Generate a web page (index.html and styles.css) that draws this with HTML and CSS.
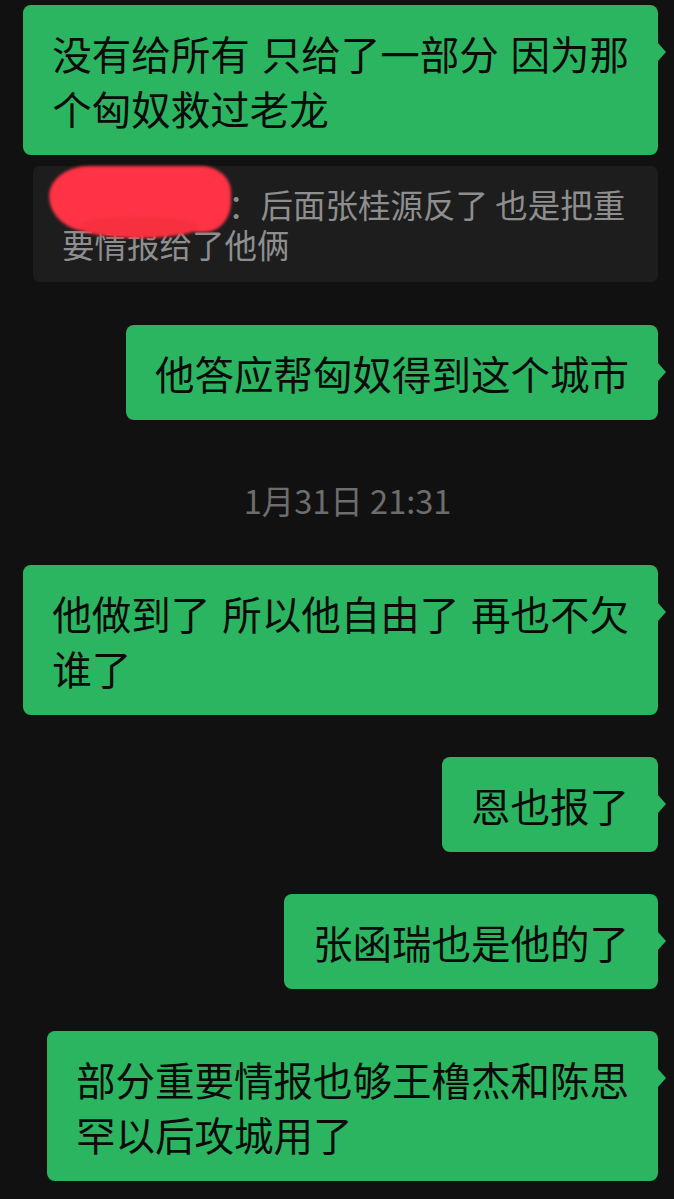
FILE: index.html
```html
<!DOCTYPE html>
<html lang="zh-CN">
<head>
    <meta charset="utf-8">
    <title>聊天记录</title>
    <link rel="stylesheet" href="styles.css">
</head>
<body>
<div class="chat">
    <div class="row first">
        <div class="bubble">没有给所有 只给了一部分 因为那<br>个匈奴救过老龙</div>
    </div>
    <div class="row quote-row">
        <div class="quote">
            <span class="name"></span>：后面张桂源反了 也是把重要情报给了他俩
            <div class="redact"></div>
        </div>
    </div>
    <div class="row after-quote">
        <div class="bubble">他答应帮匈奴得到这个城市</div>
    </div>

    <div class="time">1月31日 21:31</div>

    <div class="row after-time">
        <div class="bubble">他做到了 所以他自由了 再也不欠<br>谁了</div>
    </div>
    <div class="row">
        <div class="bubble">恩也报了</div>
    </div>
    <div class="row">
        <div class="bubble">张函瑞也是他的了</div>
    </div>
    <div class="row">
        <div class="bubble">部分重要情报也够王橹杰和陈思<br>罕以后攻城用了</div>
    </div>
</div>
</body>
</html>
```

FILE: styles.css
```css
body {
    margin: 0;
    background-color: #111111;
    font-family: "Noto Sans CJK SC", "Noto Sans", sans-serif;
}
.chat {
    display: flex;
    flex-direction: column;
    padding: 5px 16px 0 0;
}
.row {
    display: flex;
    justify-content: flex-end;
    margin-top: 42px;
}
.row.first {
    margin-top: 0;
}
.row.quote-row {
    margin-top: 11px;
}
.row.after-quote {
    margin-top: 43px;
}
.row.after-time {
    margin-top: 43px;
}
.bubble {
    position: relative;
    box-sizing: border-box;
    padding: 20px 29px 20px 29px;
    background-color: #2bb561;
    color: #0b0b0b;
    font-size: 39.5px;
    line-height: 55px;
    word-spacing: 3px;
    white-space: nowrap;
    border-radius: 8px;
}
.bubble::after {
    content: "";
    position: absolute;
    right: -8px;
    top: 38px;
    border-left: 8px solid #2bb561;
    border-top: 9px solid transparent;
    border-bottom: 9px solid transparent;
}
.quote {
    position: relative;
    max-width: 625px;
    box-sizing: border-box;
    padding: 18px 29px;
    background-color: #1d1d1d;
    color: #8e8e8e;
    font-size: 32.5px;
    line-height: 40px;
    border-radius: 7px;
}
.name {
    display: inline-block;
    width: 166px;
    height: 1px;
}
.redact {
    position: absolute;
    left: 16px;
    top: 0;
    width: 182px;
    height: 66px;
    border-radius: 40px 30px 26px 42px / 30px 26px 30px 36px;
    background-color: #ff3345;
    filter: blur(1.5px);
}
.redact::after {
    content: "";
    position: absolute;
    left: 30px;
    top: 50px;
    width: 120px;
    height: 22px;
    border-radius: 50%;
    background-color: #f7303f;
}
.time {
    margin-top: 58px;
    padding-left: 37px;
    text-align: center;
    color: #6d6d6d;
    font-size: 32.5px;
    line-height: 44px;
}
```
